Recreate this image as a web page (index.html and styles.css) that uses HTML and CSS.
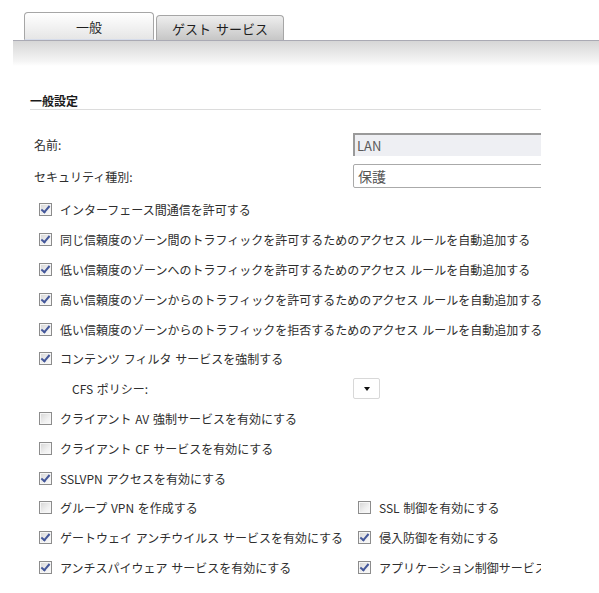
FILE: index.html
```html
<!DOCTYPE html>
<html lang="ja">
<head>
<meta charset="utf-8">
<link rel="stylesheet" href="styles.css">
</head>
<body>
<div class="tabs">
  <div class="tab tab-active">一般</div>
  <div class="tab tab-idle">ゲスト サービス</div>
</div>
<div class="band"></div>
<div class="content">
  <div class="heading">一般設定</div>
  <div class="field first">
    <span class="label">名前:</span>
    <span class="input-ro">LAN</span>
  </div>
  <div class="field">
    <span class="label">セキュリティ種別:</span>
    <span class="select-wide">保護</span>
  </div>
  <div class="checks">
    <div class="row"><span class="cb on"></span><span>インターフェース間通信を許可する</span></div>
    <div class="row"><span class="cb on"></span><span>同じ信頼度のゾーン間のトラフィックを許可するためのアクセス ルールを自動追加する</span></div>
    <div class="row"><span class="cb on"></span><span>低い信頼度のゾーンへのトラフィックを許可するためのアクセス ルールを自動追加する</span></div>
    <div class="row"><span class="cb on"></span><span>高い信頼度のゾーンからのトラフィックを許可するためのアクセス ルールを自動追加する</span></div>
    <div class="row"><span class="cb on"></span><span>低い信頼度のゾーンからのトラフィックを拒否するためのアクセス ルールを自動追加する</span></div>
    <div class="row"><span class="cb on"></span><span>コンテンツ フィルタ サービスを強制する</span></div>
    <div class="row sub"><span class="sub-label">CFS ポリシー:</span><span class="select-small"><span class="arrow"></span></span></div>
    <div class="row"><span class="cb"></span><span>クライアント AV 強制サービスを有効にする</span></div>
    <div class="row"><span class="cb"></span><span>クライアント CF サービスを有効にする</span></div>
    <div class="row"><span class="cb on"></span><span>SSLVPN アクセスを有効にする</span></div>
    <div class="pair">
      <div class="row"><span class="cb"></span><span>グループ VPN を作成する</span></div>
      <div class="row"><span class="cb"></span><span>SSL 制御を有効にする</span></div>
    </div>
    <div class="pair">
      <div class="row"><span class="cb on"></span><span>ゲートウェイ アンチウイルス サービスを有効にする</span></div>
      <div class="row"><span class="cb on"></span><span>侵入防御を有効にする</span></div>
    </div>
    <div class="pair">
      <div class="row"><span class="cb on"></span><span>アンチスパイウェア サービスを有効にする</span></div>
      <div class="row"><span class="cb on"></span><span>アプリケーション制御サービス</span></div>
    </div>
  </div>
</div>
</body>
</html>
```
FILE: styles.css
```css
html, body {
  margin: 0;
  padding: 0;
  background: #ffffff;
}
body {
  font-family: "Noto Sans CJK JP", "Noto Sans", sans-serif;
  font-size: 12px;
  color: #2e2e2e;
  width: 599px;
  overflow: hidden;
}
.tabs {
  display: flex;
  align-items: flex-end;
  padding: 12px 0 0 24px;
  height: 28px;
}
.tab {
  box-sizing: border-box;
  display: flex;
  align-items: center;
  justify-content: center;
  border: 1px solid #a6a6a6;
  border-bottom: none;
  border-radius: 4px 4px 0 0;
  color: #1e1e1e;
  font-size: 13px;
  word-spacing: 2px;
}
.tab-active {
  width: 130px;
  height: 28px;
  background: linear-gradient(#ffffff, #e6e6e6);
  border-bottom: 1px solid #d6dcea;
}
.tab-idle {
  width: 128px;
  height: 25px;
  margin-left: 2px;
  background: linear-gradient(#eeeeee, #c6c6c6);
}
.band {
  margin-left: 13px;
  height: 25px;
  border-top: 1px solid #aaaab4;
  background: linear-gradient(#d6d6d6, #f4f4f4 80%, #ffffff);
}
.content {
  width: 541px;
  overflow: hidden;
}
.heading {
  margin: 27px 0 0 30px;
  height: 16px;
  line-height: 16px;
  font-weight: bold;
  color: #1a1a1a;
  border-bottom: 1px solid #dcdcdc;
}
.field {
  display: flex;
  align-items: center;
  height: 32px;
  padding-left: 34px;
}
.field.first {
  margin-top: 18px;
}
.label {
  width: 319px;
}
.input-ro {
  box-sizing: border-box;
  flex: 1;
  height: 23px;
  line-height: 21px;
  background: #eeeff3;
  border-top: 2px solid #9a9a9a;
  border-left: 2px solid #9a9a9a;
  padding-left: 2px;
  color: #5a5a5a;
  font-size: 13px;
  margin-right: -10px;
}
.select-wide {
  box-sizing: border-box;
  flex: 1;
  height: 24px;
  line-height: 22px;
  border: 1px solid #aaaaaa;
  border-radius: 2px;
  padding-left: 4px;
  color: #555555;
  font-size: 14px;
  margin-right: -10px;
}
.checks {
  margin-top: 3px;
}
.row {
  display: flex;
  align-items: center;
  height: 29.8px;
  padding-left: 39px;
  white-space: nowrap;
  word-spacing: 1px;
}
.cb {
  box-sizing: border-box;
  flex: none;
  width: 13px;
  height: 13px;
  margin-right: 8px;
  border: 1px solid #8c8c8c;
  box-shadow: inset 0 0 0 1px #f6f6f6;
  background: linear-gradient(135deg, #d4d4d4, #f0f0f0 60%, #fbfbfb);
  position: relative;
}
.cb.on::after {
  content: "";
  position: absolute;
  left: 3px;
  top: 0px;
  width: 3px;
  height: 7px;
  border-right: 2px solid #44579a;
  border-bottom: 2px solid #44579a;
  transform: rotate(40deg);
}
.sub-label {
  padding-left: 33px;
  width: 281px;
}
.select-small {
  box-sizing: border-box;
  width: 27px;
  height: 21px;
  border: 1px solid #d8d8d8;
  border-radius: 2px;
  display: flex;
  align-items: center;
  justify-content: center;
}
.arrow {
  width: 0;
  height: 0;
  border-left: 3.5px solid transparent;
  border-right: 3.5px solid transparent;
  border-top: 4px solid #111111;
}
.pair {
  display: grid;
  grid-template-columns: 358px 1fr;
}
.pair .row + .row {
  padding-left: 0;
}
```
